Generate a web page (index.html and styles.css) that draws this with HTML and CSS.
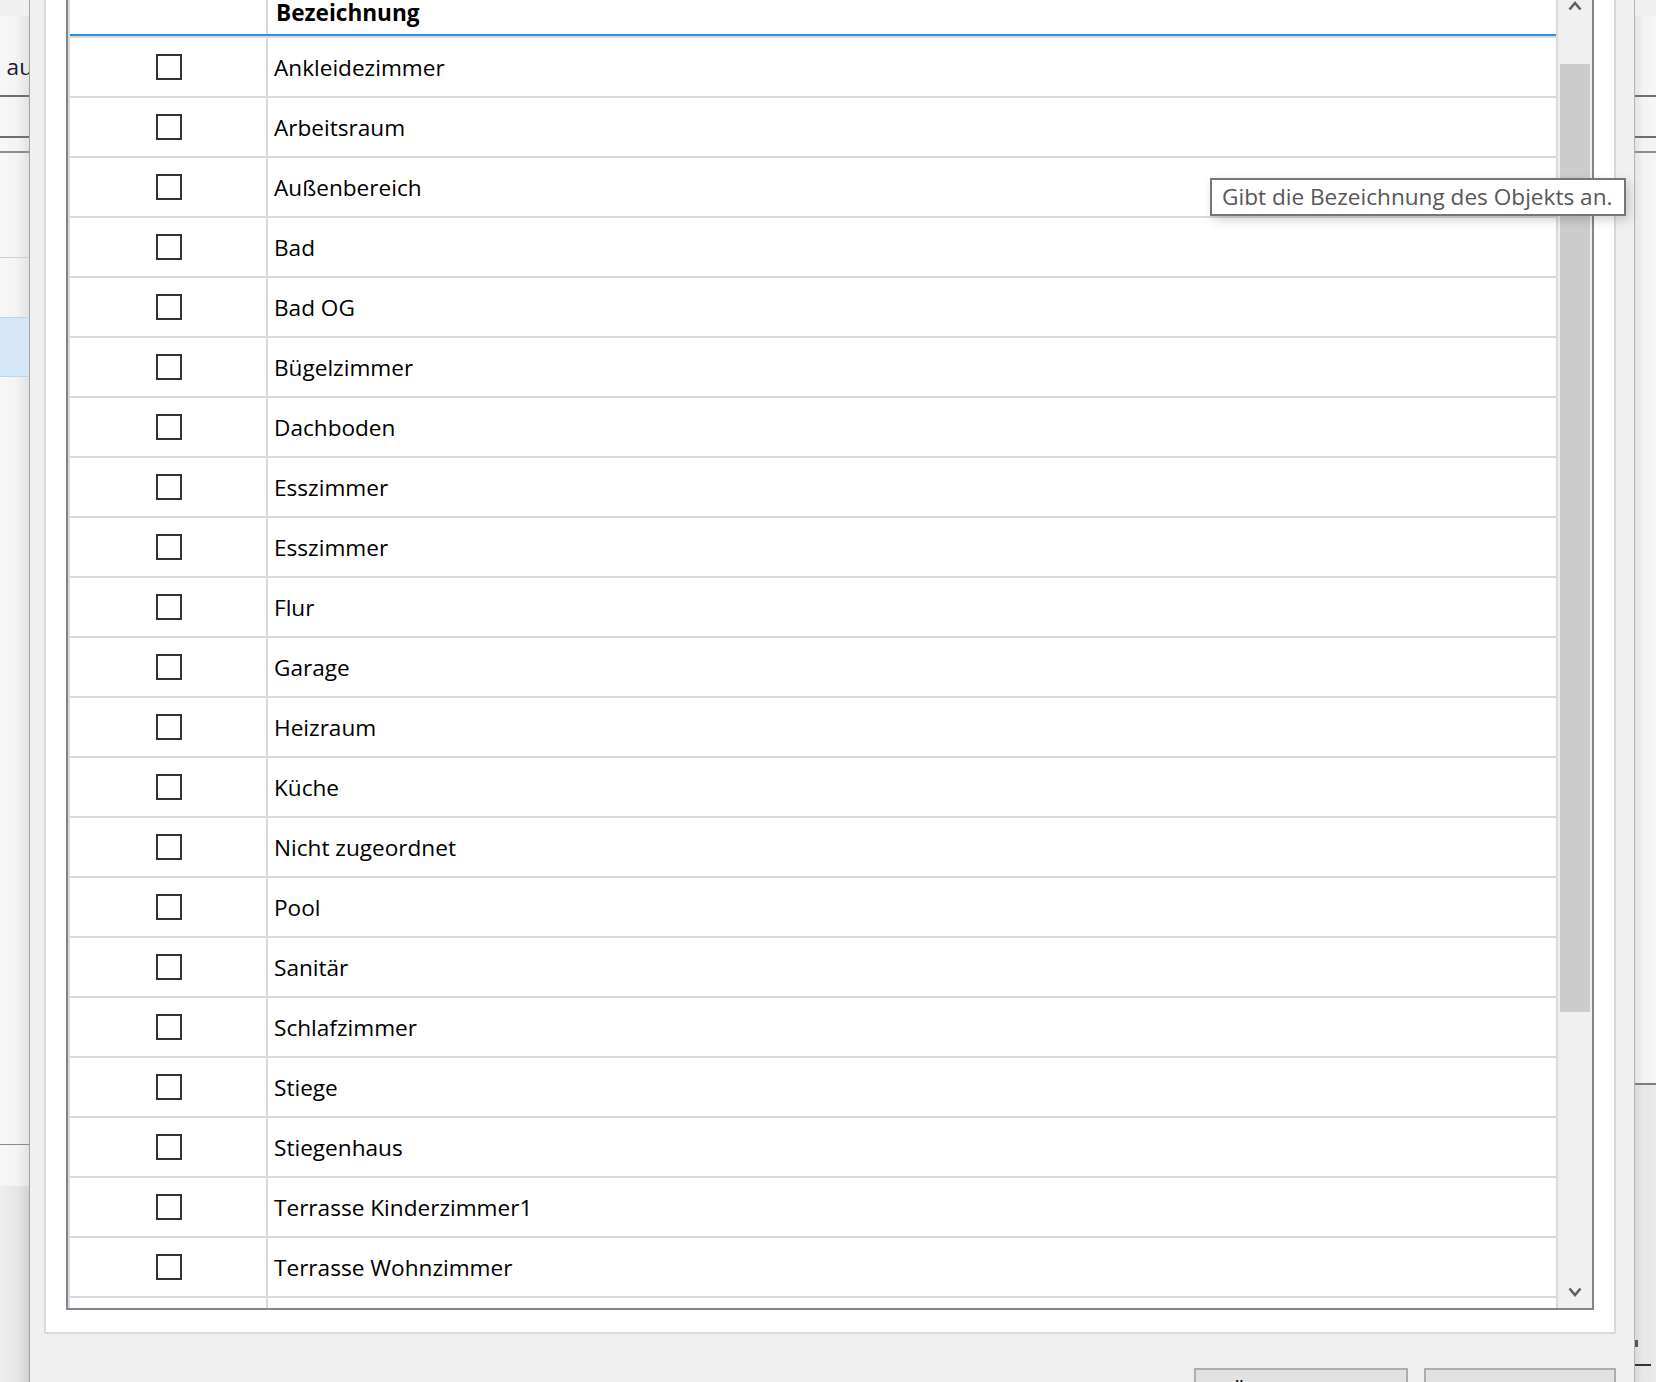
FILE: index.html
```html
<!DOCTYPE html>
<html lang="de">
<head>
<meta charset="utf-8">
<title>Bezeichnung</title>
<link rel="stylesheet" href="styles.css">
</head>
<body>
<div class="screen">
  <div class="strip strip-left">
    <div class="s-top"></div>
    <div class="s-box"><span class="s-sel-char">e</span>&nbsp;au</div>
    <div class="s-line"></div>
    <div class="s-gap-a"></div>
    <div class="s-line"></div>
    <div class="s-gap-b"></div>
    <div class="s-line s-line-lite"></div>
    <div class="s-gap-c"></div>
    <div class="s-hair"></div>
    <div class="s-gap-d"></div>
    <div class="s-selected"></div>
    <div class="s-gap-e"></div>
    <div class="s-hair s-hair-dark"></div>
    <div class="s-gap-f"></div>
    <div class="s-bottom"></div>
  </div>

  <div class="dialog">
    <div class="panel">
      <div class="table">
        <div class="grid">
          <div class="row head">
            <div class="c1"></div>
            <div class="c2">Bezeichnung</div>
          </div>
          <div class="rows">
            <div class="row"><div class="c1"><span class="cb"></span></div><div class="c2">Ankleidezimmer</div></div>
            <div class="row"><div class="c1"><span class="cb"></span></div><div class="c2">Arbeitsraum</div></div>
            <div class="row"><div class="c1"><span class="cb"></span></div><div class="c2">Außenbereich</div></div>
            <div class="row"><div class="c1"><span class="cb"></span></div><div class="c2">Bad</div></div>
            <div class="row"><div class="c1"><span class="cb"></span></div><div class="c2">Bad OG</div></div>
            <div class="row"><div class="c1"><span class="cb"></span></div><div class="c2">Bügelzimmer</div></div>
            <div class="row"><div class="c1"><span class="cb"></span></div><div class="c2">Dachboden</div></div>
            <div class="row"><div class="c1"><span class="cb"></span></div><div class="c2">Esszimmer</div></div>
            <div class="row"><div class="c1"><span class="cb"></span></div><div class="c2">Esszimmer</div></div>
            <div class="row"><div class="c1"><span class="cb"></span></div><div class="c2">Flur</div></div>
            <div class="row"><div class="c1"><span class="cb"></span></div><div class="c2">Garage</div></div>
            <div class="row"><div class="c1"><span class="cb"></span></div><div class="c2">Heizraum</div></div>
            <div class="row"><div class="c1"><span class="cb"></span></div><div class="c2">Küche</div></div>
            <div class="row"><div class="c1"><span class="cb"></span></div><div class="c2">Nicht zugeordnet</div></div>
            <div class="row"><div class="c1"><span class="cb"></span></div><div class="c2">Pool</div></div>
            <div class="row"><div class="c1"><span class="cb"></span></div><div class="c2">Sanitär</div></div>
            <div class="row"><div class="c1"><span class="cb"></span></div><div class="c2">Schlafzimmer</div></div>
            <div class="row"><div class="c1"><span class="cb"></span></div><div class="c2">Stiege</div></div>
            <div class="row"><div class="c1"><span class="cb"></span></div><div class="c2">Stiegenhaus</div></div>
            <div class="row"><div class="c1"><span class="cb"></span></div><div class="c2">Terrasse Kinderzimmer1</div></div>
            <div class="row"><div class="c1"><span class="cb"></span></div><div class="c2">Terrasse Wohnzimmer</div></div>
            <div class="row"><div class="c1"><span class="cb"></span></div><div class="c2">Wohnzimmer</div></div>
          </div>
        </div>
        <div class="vscroll">
          <div class="sb-up">
            <svg width="14" height="12" viewBox="0 0 14 12"><polyline points="1.5,10.5 7,4 12.5,10.5" fill="none" stroke="#606060" stroke-width="2.6"/></svg>
          </div>
          <div class="sb-thumb"></div>
          <div class="sb-track"></div>
          <div class="sb-down">
            <svg width="14" height="10" viewBox="0 0 14 10"><polyline points="1.5,1.5 7,8 12.5,1.5" fill="none" stroke="#606060" stroke-width="2.6"/></svg>
          </div>
        </div>
      </div>
    </div>
    <div class="buttons">
      <button class="btn btn-apply">Übernehmen</button>
      <button class="btn btn-cancel">Abbrechen</button>
    </div>
  </div>

  <div class="strip strip-right">
    <div class="s-top"></div>
    <div class="s-box"></div>
    <div class="s-line"></div>
    <div class="s-gap-a"></div>
    <div class="s-line"></div>
    <div class="s-gap-b"></div>
    <div class="s-line s-line-lite"></div>
    <div class="s-gap-r1"></div>
    <div class="s-line s-line-dark"></div>
    <div class="s-lower">
      <div class="s-mark"></div>
      <div class="s-dash"></div>
    </div>
  </div>

  <div class="tooltip">Gibt die Bezeichnung des Objekts an.</div>
</div>
</body>
</html>
```

FILE: styles.css
```css
html, body {
  margin: 0;
  padding: 0;
  height: 100%;
  overflow: hidden;
}

body {
  font-family: "Open Sans", "Noto Sans", "DejaVu Sans", sans-serif;
  font-size: 22.6px;
  color: #000;
  background: #f0f0f0;
}

.screen {
  position: relative;
  display: flex;
  height: 1382px;
  width: 1656px;
  overflow: hidden;
}

/* ---------- background window strips ---------- */
.strip {
  display: flex;
  flex-direction: column;
  flex: none;
  overflow: hidden;
  position: relative;
}
.strip-left {
  width: 29px;
  background: linear-gradient(to right, #f7f7f7 0%, #f3f3f3 60%, #e2e2e2 100%);
}
.strip-right {
  width: 21px;
  background: linear-gradient(to right, #e4e4e4 0%, #f3f3f3 40%, #f6f6f6 100%);
}
.s-top {
  height: 16px;
  background: #f0f0f0;
  flex: none;
}
.s-box {
  height: 79px;
  flex: none;
  display: flex;
  justify-content: flex-end;
  align-items: flex-start;
  padding-top: 36px;
  box-sizing: border-box;
  line-height: 30px;
  white-space: nowrap;
  color: #1a1a2e;
  margin-right: -4px;
}
.s-sel-char {
  color: #6fb2e8;
}
.s-line {
  height: 2px;
  flex: none;
  background: #6f6f6f;
}
.s-line-lite {
  background: #8a8c96;
}
.s-line-dark {
  background: #7d7d7d;
}
.s-hair {
  height: 1px;
  flex: none;
  background: #cfcfcf;
}
.s-hair-dark {
  background: #8a8a8a;
}
.s-gap-a { height: 39px; flex: none; }
.s-gap-b { height: 13px; flex: none; }
.s-gap-c { height: 104px; flex: none; }
.s-gap-d { height: 59px; flex: none; }
.s-gap-e { height: 767px; flex: none; }
.s-gap-f { height: 41px; flex: none; }
.s-gap-r1 { height: 930px; flex: none; }
.s-selected {
  height: 60px;
  flex: none;
  background: #d4e7f7;
  border-top: 1px solid #b9d6ee;
  border-bottom: 1px solid #b9d6ee;
  box-sizing: border-box;
}
.s-bottom {
  flex: 1;
  background: linear-gradient(to right, #efefef 0%, #e6e6e6 60%, #d2d2d2 100%);
}
.s-lower {
  flex: 1;
  background: linear-gradient(to right, #d9d9d9 0%, #e6e6e6 35%, #ebebeb 100%);
  display: flex;
  flex-direction: column;
}
.s-mark {
  margin-top: 255px;
  width: 3px;
  height: 7px;
  background: #555;
}
.s-dash {
  margin-top: 17px;
  width: 16px;
  height: 2px;
  background: #333;
}

/* ---------- dialog ---------- */
.dialog {
  flex: none;
  width: 1606px;
  box-sizing: border-box;
  border-left: 1px solid #a3a3a3;
  border-right: 1px solid #b5b5b5;
  background: #f0f0f0;
  padding: 0 18px 0 14px;
  display: flex;
  flex-direction: column;
}

.panel {
  background: #fff;
  border: 2px solid #dadada;
  border-top: none;
  padding: 0 20px 22px 20px;
}

.table {
  display: flex;
  height: 1310px;
  box-sizing: border-box;
  border: 2px solid #80868e;
  border-top: none;
  background: #fff;
}

.grid {
  flex: 1;
  min-width: 0;
  overflow: hidden;
  border-left: 2px solid #dadada;
}

.row {
  display: flex;
  height: 58px;
  border-bottom: 2px solid #dadada;
}

.rows {
  border-top: 2px solid #dadada;
}

.c1 {
  flex: none;
  width: 198px;
  border-right: 2px solid #dadada;
  display: flex;
  align-items: center;
  justify-content: center;
  padding-left: 2px;
  box-sizing: border-box;
}

.c2 {
  flex: 1;
  display: flex;
  align-items: center;
  padding-left: 6px;
  white-space: nowrap;
}

.head {
  height: 34px;
  border-bottom: 2px solid #2b8def;
}
.head .c2 {
  align-items: flex-start;
  line-height: 25px;
  font-weight: 700;
  padding-left: 8px;
}

.cb {
  display: block;
  width: 22px;
  height: 22px;
  border: 2px solid #333;
  background: #fff;
}

/* ---------- scrollbar ---------- */
.vscroll {
  flex: none;
  width: 34px;
  border-left: 2px solid #dadada;
  background: #f0f0f0;
  display: flex;
  flex-direction: column;
}
.sb-up {
  height: 64px;
  flex: none;
  display: flex;
  justify-content: center;
  align-items: flex-start;
  margin-top: -1px;
}
.sb-thumb {
  height: 948px;
  flex: none;
  margin: 1px 2px 0 2px;
  background: #cdcdcd;
}
.sb-track {
  flex: 1;
}
.sb-down {
  height: 34px;
  flex: none;
  display: flex;
  justify-content: center;
  align-items: flex-end;
  padding-bottom: 11px;
  box-sizing: border-box;
}
.sb-up svg, .sb-down svg {
  display: block;
}

/* ---------- buttons ---------- */
.buttons {
  display: flex;
  justify-content: flex-end;
  gap: 16px;
  margin-top: 34px;
}
.btn {
  height: 46px;
  border: 2px solid #adadad;
  background: #e1e1e1;
  font-family: inherit;
  font-size: 22.6px;
  color: #000;
  padding: 0;
  margin: 0;
}
.btn-apply { width: 214px; }
.btn-cancel { width: 192px; }

/* ---------- tooltip ---------- */
.tooltip {
  position: absolute;
  left: 1210px;
  top: 178px;
  width: 416px;
  height: 38px;
  box-sizing: border-box;
  border: 2px solid #767676;
  background: #fff;
  color: #575757;
  line-height: 34px;
  padding-left: 10px;
  white-space: nowrap;
  box-shadow: 3px 4px 10px rgba(0, 0, 0, 0.18);
}
```
